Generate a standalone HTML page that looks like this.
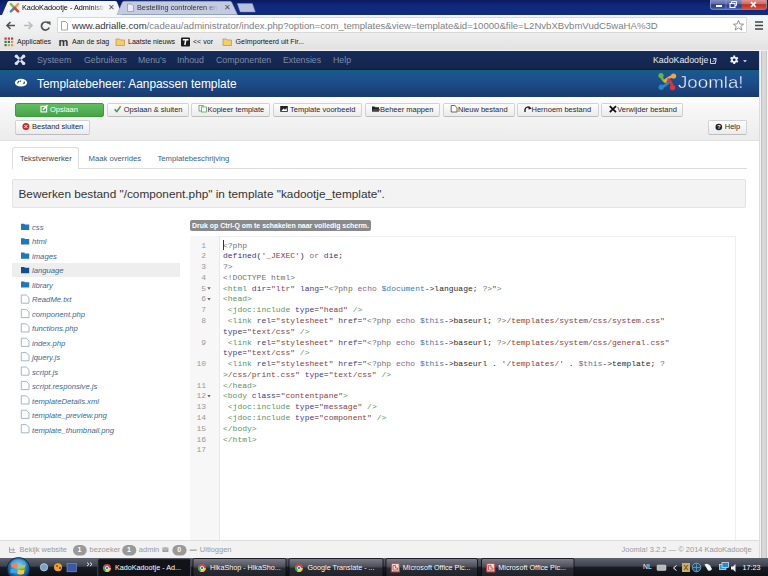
<!DOCTYPE html>
<html><head><meta charset="utf-8">
<style>
*{box-sizing:border-box;margin:0;padding:0}
html,body{width:768px;height:576px;overflow:hidden;background:#fff;font-family:"Liberation Sans",sans-serif}
.a{position:absolute;white-space:nowrap}
#frame{left:0;top:0;width:768px;height:15px;background:linear-gradient(#0a1b60,#10287c 40%,#122c82)}
.tab1{left:0;top:1px;width:126px;height:15px}
#toolbar{left:0;top:14.5px;width:768px;height:36.5px;background:linear-gradient(#f6f7f9,#eeeeee 50%,#e2e2e2);border-bottom:1px solid #f2f2f2}
#bmbar{display:none}
#url{left:56.8px;top:17.3px;width:690px;height:15.8px;background:#fff;border:1px solid #d8d8d8;border-radius:1px}
#nav{left:0;top:51px;width:759px;height:18.5px;background:linear-gradient(#162c5a,#12264c);border-bottom:1.5px solid #0b1a46}
#header{left:0;top:69.5px;width:759px;height:27px;background:linear-gradient(#15607f,#1b5592 15%,#1c4b89 50%,#1a3a6c)}
#subhead{left:0;top:96.5px;width:759px;height:44px;background:linear-gradient(#fefefe,#f6f6f6 30%,#ececec);border-bottom:1px solid #e0e0e0}
.btn{position:absolute;top:103px;height:13.6px;border:1px solid #d2d2d2;border-bottom-color:#bdbdbd;border-radius:2px;background:linear-gradient(#fefefe,#ebebeb);font-size:7.7px;color:#333;line-height:12.5px;text-align:center;white-space:nowrap}
.btn.g{background:linear-gradient(#5fbf5f,#48a348);border-color:#3f9a3f;color:#fff}
#scroll{left:759px;top:51px;width:9px;height:507px;background:#f4f4f4;border-left:0.6px solid #dcdcdc}
#thumb{left:761px;top:51px;width:6px;height:507px;background:#d8d8d8;border-left:1px solid #c0c0c0;border-right:1px solid #c6c6c6}
#footer{left:0;top:540px;width:759px;height:18px;background:#f2f2f2;border-top:1px solid #dddddd;font-size:7.6px;color:#999}
#taskbar{left:0;top:558px;width:768px;height:18px;background:linear-gradient(#5e616e,#3e414e 45%,#1a1c24 52%,#0e0f14)}
.tree{font-size:7.7px;font-style:italic;color:#3a6890;left:32px}
.code{font-family:"Liberation Mono",monospace;font-size:8px;line-height:10.78px;white-space:pre}
.ln{color:#999;font-family:"Liberation Mono",monospace;font-size:8px;text-align:right;width:13px;left:194px}
#lns{left:192px;top:240.5px;width:14px;text-align:right;color:#999}
#codetxt{left:223px;top:240.5px;color:#2a2a2a}
.m{color:#707070}.k{color:#8a648a}.s{color:#8a4040}.t{color:#5a9464}.at{color:#40408a}.v{color:#4a78a8}.b{color:#40307e}
.bt{font-size:7.5px;color:#2a2a2a;line-height:9px}.bt.w{color:#fff}
.ft{top:545.2px;font-size:7.5px;color:#9a9a9a}
.tk{top:563px;font-size:7.2px;color:#fafafa}
</style></head><body>
<!-- window frame / tab strip -->
<div class="a" id="frame"></div>
<svg class="a" style="left:0;top:0" width="768" height="16">
  <path d="M2,15 L7.5,2 Q8,1 9.5,1 L115,1 Q116.5,1 117,2 L122,15 Z" fill="#f6f7f9"/>
  <path d="M117,14.8 L122.5,2 Q123,1.3 124.5,1.3 L229.5,1.3 Q231,1.3 231.5,2 L237.5,14.8 Z" fill="#c3cbe0" stroke="#8f9cc2" stroke-width="0.6"/>
  <path d="M237.3,3.6 L252.4,3.6 L255.3,11.9 L240.2,11.9 Z" fill="#b9c3dc" stroke="#7f8fc0" stroke-width="0.5"/>
  <defs>
   <linearGradient id="wc" x1="0" y1="0" x2="0" y2="1"><stop offset="0" stop-color="#8a9ac8"/><stop offset="0.5" stop-color="#5a6aa8"/><stop offset="0.55" stop-color="#2c3c88"/><stop offset="1" stop-color="#3a58a8"/></linearGradient>
   <linearGradient id="wx" x1="0" y1="0" x2="0" y2="1"><stop offset="0" stop-color="#e0a098"/><stop offset="0.5" stop-color="#d06858"/><stop offset="0.55" stop-color="#b83020"/><stop offset="1" stop-color="#d85040"/></linearGradient>
  </defs>
  <rect x="710.5" y="-1" width="56" height="10.3" rx="1.8" fill="url(#wc)" stroke="#c8d0e8" stroke-width="0.6"/>
  <rect x="741.5" y="-0.7" width="24.7" height="9.7" fill="url(#wx)"/>
  <path d="M726,0 L726,9" stroke="#a0acd0" stroke-width="0.5"/>
  <rect x="716" y="5" width="6" height="2" fill="#fff"/>
  <rect x="730" y="3.5" width="5" height="4" fill="none" stroke="#fff" stroke-width="1.1"/>
  <path d="M731.5,3.5 L731.5,1.5 L736.5,1.5 L736.5,5.5 L735,5.5" fill="none" stroke="#fff" stroke-width="0.9"/>
  <path d="M751,2.2 L755.8,7 M755.8,2.2 L751,7" stroke="#fff" stroke-width="1.7"/>
</svg>
<div class="a" style="left:22px;top:3px;font-size:7.3px;color:#0a0a0a;width:83px;overflow:hidden;-webkit-mask-image:linear-gradient(to right,#000 85%,transparent)">KadoKadootje - Administr</div>
<div class="a" style="left:108px;top:3px;font-size:8px;color:#555">&#x2715;</div>
<div class="a" style="left:137px;top:3px;font-size:7.3px;color:#333;width:81px;overflow:hidden;-webkit-mask-image:linear-gradient(to right,#000 85%,transparent)">Bestelling controleren en</div>
<div class="a" style="left:223.5px;top:3px;font-size:8px;color:#555">&#x2715;</div>

<!-- chrome toolbar -->
<div class="a" id="toolbar"></div>
<div class="a" id="bmbar"></div>
<div class="a" id="url"></div>
<div class="a" style="left:72px;top:19.5px;font-size:9.6px;color:#808080"><span style="color:#333">www.adrialle.com</span>/cadeau/administrator/index.php?option=com_templates&amp;view=template&amp;id=10000&amp;file=L2NvbXBvbmVudC5waHA%3D</div>
<div class="a" style="left:17px;top:37.6px;font-size:7.05px;color:#151515">Applicaties</div>
<div class="a" style="left:72px;top:37.6px;font-size:7.05px;color:#151515">Aan de slag</div>
<div class="a" style="left:128px;top:37.6px;font-size:7.05px;color:#151515">Laatste nieuws</div>
<div class="a" style="left:193px;top:37.6px;font-size:7.05px;color:#151515">&lt;&lt; vor</div>
<div class="a" style="left:235.5px;top:37.6px;font-size:7.05px;color:#151515">Ge&iuml;mporteerd uit Fir...</div>

<svg class="a" style="left:0;top:0" width="768" height="51">
  <!-- favicon joomla -->
  <g transform="translate(14.5,7.8)" stroke-linecap="round">
    <path d="M-3.6,-3.6 L0,0" stroke="#8cc04a" stroke-width="2.6"/>
    <path d="M3.6,-3.6 L0,0" stroke="#f0a040" stroke-width="2.6"/>
    <path d="M-3.6,3.6 L0,0" stroke="#4a8ad0" stroke-width="2.6"/>
    <path d="M3.6,3.6 L0,0" stroke="#d8483a" stroke-width="2.6"/>
  </g>
  <!-- tab2 page icon -->
  <path d="M127.5,4 L131.5,4 L133.5,6 L133.5,11.5 L127.5,11.5 Z" fill="#e8ebf3" stroke="#7d8598" stroke-width="0.6"/>
  <!-- back -->
  <path d="M7,25.5 L15,25.5 M10.5,22 L7,25.5 L10.5,29" stroke="#505050" stroke-width="1.6" fill="none"/>
  <!-- fwd -->
  <path d="M32,25.5 L24,25.5 M28.5,22 L32,25.5 L28.5,29" stroke="#bdbdbd" stroke-width="1.6" fill="none"/>
  <!-- reload -->
  <path d="M48.6,23.5 A4,4 0 1 0 49.2,27.5" stroke="#505050" stroke-width="1.7" fill="none"/>
  <path d="M46.5,21.5 L50.5,21.5 L50.5,25.5 Z" fill="#505050"/>
  <!-- page icon url -->
  <path d="M61.5,21.5 L65.5,21.5 L67.5,23.5 L67.5,30 L61.5,30 Z" fill="#fff" stroke="#8a8a8a" stroke-width="0.8"/>
  <!-- star -->
  <path d="M738.5,20.5 L740,24 L743.6,24.2 L740.8,26.5 L741.8,30 L738.5,28 L735.2,30 L736.2,26.5 L733.4,24.2 L737,24 Z" fill="#fff" stroke="#777" stroke-width="0.8"/>
  <!-- menu -->
  <path d="M755,22 L763,22 M755,25.5 L763,25.5 M755,29 L763,29" stroke="#444" stroke-width="1.4"/>
  <!-- apps grid -->
  <g>
   <rect x="4.5" y="37.5" width="2.2" height="2.2" fill="#c0392b"/><rect x="7.8" y="37.5" width="2.2" height="2.2" fill="#a94a4a"/><rect x="11" y="37.5" width="2.2" height="2.2" fill="#b04040"/>
   <rect x="4.5" y="40.8" width="2.2" height="2.2" fill="#2f7a6a"/><rect x="7.8" y="40.8" width="2.2" height="2.2" fill="#2c7a5a"/><rect x="11" y="40.8" width="2.2" height="2.2" fill="#c8a030"/>
   <rect x="4.5" y="44" width="2.2" height="2.2" fill="#4a7a3a"/><rect x="7.8" y="44" width="2.2" height="2.2" fill="#d8a040"/><rect x="11" y="44" width="2.2" height="2.2" fill="#caa060"/>
  </g>
  <!-- m icon -->
  <text x="58.5" y="45.6" font-family="Liberation Sans" font-weight="bold" font-size="11" fill="#333" transform="scale(1,1)">m</text>
  <!-- folder icons -->
  <path d="M116,39 L119.5,39 L120.5,40 L124.5,40 L124.5,45.5 L116,45.5 Z" fill="#f2cf6a" stroke="#b8923a" stroke-width="0.7"/>
  <path d="M223,39 L226.5,39 L227.5,40 L231.5,40 L231.5,45.5 L223,45.5 Z" fill="#f2cf6a" stroke="#b8923a" stroke-width="0.7"/>
  <!-- T icon -->
  <rect x="181" y="37.5" width="9" height="9" rx="1" fill="#1a1a1a"/>
  <path d="M182.8,39.8 L188.5,39.8 M185.8,39.8 L184.8,45" stroke="#fff" stroke-width="1.5"/>
</svg>
<!-- joomla nav -->
<div class="a" id="nav"></div>
<div class="a" style="left:37px;top:55px;font-size:8.8px;color:#7d8ca6">Systeem</div>
<div class="a" style="left:84px;top:55px;font-size:8.8px;color:#7d8ca6">Gebruikers</div>
<div class="a" style="left:138px;top:55px;font-size:8.8px;color:#7d8ca6">Menu's</div>
<div class="a" style="left:177px;top:55px;font-size:8.8px;color:#7d8ca6">Inhoud</div>
<div class="a" style="left:216px;top:55px;font-size:8.8px;color:#7d8ca6">Componenten</div>
<div class="a" style="left:283px;top:55px;font-size:8.8px;color:#7d8ca6">Extensies</div>
<div class="a" style="left:333px;top:55px;font-size:8.8px;color:#7d8ca6">Help</div>
<div class="a" style="left:653px;top:55px;font-size:8.8px;color:#e8ecf2">KadoKadootje</div>

<!-- header -->
<div class="a" id="header"></div>
<div class="a" style="left:37px;top:77.2px;font-size:11.9px;color:#fff">Templatebeheer: Aanpassen template</div>

<svg class="a" style="left:0;top:51px" width="759" height="46">
  <!-- nav joomla icon -->
  <g transform="translate(20,8.8)" fill="none" stroke-linecap="round">
    <path d="M-3.4,-3.4 L3.4,3.4 M3.4,-3.4 L-3.4,3.4" stroke="#dde1ee" stroke-width="2.6"/>
    <circle cx="-3.6" cy="-3.6" r="1.7" fill="#dde1ee"/>
    <circle cx="3.6" cy="-3.6" r="1.7" fill="#dde1ee"/>
    <circle cx="-3.6" cy="3.6" r="1.7" fill="#dde1ee"/>
    <circle cx="3.6" cy="3.6" r="1.7" fill="#dde1ee"/>
    <path d="M-1.6,0 L0,-1.6 L1.6,0 L0,1.6 Z" fill="#3a4a70"/>
  </g>
  <!-- external link icon -->
  <path d="M710.5,7.5 L710.5,12.5 L715.5,12.5 L715.5,10 M713,7.5 L716,7.5 L716,10.5 M716,7.5 L712.5,11" stroke="#dfe3f0" stroke-width="0.9" fill="none"/>
  <!-- gear -->
  <g transform="translate(734.2,8.8)">
    <circle r="3.1" fill="#f0f2f8"/>
    <path d="M0,-4.2 L0,4.2 M-3.64,-2.1 L3.64,2.1 M3.64,-2.1 L-3.64,2.1" stroke="#f0f2f8" stroke-width="2"/>
    <circle r="1.4" fill="#12264c"/>
  </g>
  <path d="M743,9.3 L747,9.3 L745,11.3 Z" fill="#dfe3f0"/>
  <!-- eye icon -->
  <g transform="translate(21,31.7)">
    <ellipse cx="0" cy="0" rx="6.1" ry="3.9" fill="#fff"/>
    <path d="M-3.1,0.6 A3,2.6 0 0 1 -2.2,-1.6" stroke="#10223f" stroke-width="1.1" fill="none"/>
    <path d="M3.2,-1 A3,2.6 0 0 1 2.6,1.4" stroke="#10223f" stroke-width="1.1" fill="none"/>
    <ellipse cx="-0.7" cy="-1.6" rx="1" ry="0.7" fill="#10223f"/>
  </g>
  <!-- joomla logo symbol -->
  <g transform="translate(0,-51)" stroke-linecap="round" stroke-linejoin="round" fill="none" stroke-width="2.7">
    <path d="M661,75.5 Q662,80 665.8,82.2" stroke="#6cb33e"/>
    <circle cx="661" cy="75.6" r="2.6" fill="#6cb33e"/>
    <path d="M673.5,76 Q668.5,77 664.8,81" stroke="#f5a443"/>
    <circle cx="673.6" cy="76" r="2.6" fill="#f5a443"/>
    <path d="M672.6,87.6 Q671.5,82 668.6,79.4" stroke="#e4333a"/>
    <circle cx="672.6" cy="87.6" r="2.7" fill="#e4333a"/>
    <path d="M661.2,87.2 Q665,86 668.2,83" stroke="#2a86c8"/>
    <circle cx="661.2" cy="87.2" r="2.6" fill="#2a86c8"/>
  </g>
</svg>
<div class="a" style="left:677.5px;top:72.7px;font-size:17px;color:#f4f6fa;-webkit-text-stroke:0.35px #1c4b89;transform-origin:0 0;transform:scaleX(1.1);font-weight:normal">Joomla!</div>
<!-- subhead toolbar -->
<div class="a" id="subhead"></div>
<div class="btn g" style="left:14.9px;top:103px;width:89.2px"></div><div class="a bt w" style="left:50px;top:104.6px">Opslaan</div>
<div class="btn " style="left:106.7px;top:103px;width:82.3px"></div><div class="a bt" style="left:123.75px;top:104.6px">Opslaan &amp; sluiten</div>
<div class="btn " style="left:191.4px;top:103px;width:78.6px"></div><div class="a bt" style="left:207.5px;top:104.6px">Kopieer template</div>
<div class="btn " style="left:273.1px;top:103px;width:88.9px"></div><div class="a bt" style="left:290px;top:104.6px">Template voorbeeld</div>
<div class="btn " style="left:364.6px;top:103px;width:75.4px"></div><div class="a bt" style="left:380px;top:104.6px">Beheer mappen</div>
<div class="btn " style="left:443.1px;top:103px;width:71.7px"></div><div class="a bt" style="left:458px;top:104.6px">Nieuw bestand</div>
<div class="btn " style="left:516.9px;top:103px;width:82.0px"></div><div class="a bt" style="left:531.5px;top:104.6px">Hernoem bestand</div>
<div class="btn " style="left:601.4px;top:103px;width:81.6px"></div><div class="a bt" style="left:617.25px;top:104.6px">Verwijder bestand</div>
<div class="btn " style="left:14.9px;top:120px;width:75.4px;height:14.6px"></div><div class="a bt" style="left:32px;top:122.2px">Bestand sluiten</div>
<div class="btn " style="left:707.8px;top:120px;width:39.3px;height:14.6px"></div><div class="a bt" style="left:724.75px;top:122.2px">Help</div>
<svg class="a" style="left:0;top:97px" width="759" height="44">
 <!-- save icon (edit) -->
 <g transform="translate(0,0)">
  <rect x="41" y="9.3" width="5.6" height="5.6" fill="none" stroke="#fff" stroke-width="1.1"/>
  <path d="M43,12.8 L47.5,8.2" stroke="#fff" stroke-width="1.4"/>
 </g>
 <!-- check -->
 <path d="M114.6,12.4 L116.8,14.6 L120.6,9.4" stroke="#4a9a4a" stroke-width="1.6" fill="none"/>
 <!-- copy -->
 <rect x="199" y="8.5" width="4.2" height="5.5" fill="none" stroke="#5aa45a" stroke-width="0.8"/>
 <rect x="201.5" y="10" width="5" height="5" fill="#fff" stroke="#5aa45a" stroke-width="0.8"/>
 <!-- picture -->
 <rect x="280.2" y="9" width="7.6" height="5.8" fill="#222"/>
 <path d="M281.3,14 L283.5,11.5 L285,12.8 L286.5,11 L287,14 Z" fill="#fff"/>
 <!-- folder open -->
 <path d="M372,9.5 L374.5,9.5 L375.3,10.3 L379,10.3 L379,14.5 L372,14.5 Z" fill="#222"/>
 <path d="M373,12 L380,12 L379,14.5 L372,14.5 Z" fill="#444"/>
 <!-- new file -->
 <path d="M451.2,8.5 L454.8,8.5 L457,10.7 L457,15 L451.2,15 Z" fill="#fff" stroke="#444" stroke-width="0.8"/>
 <!-- refresh -->
 <path d="M530.5,11.5 A3,3 0 0 0 525,12.5 L525,15" stroke="#222" stroke-width="1.4" fill="none"/>
 <path d="M528.8,9.2 L531.8,11.8 L528.4,12.6 Z" fill="#222"/>
 <!-- X -->
 <path d="M609.8,9.2 L616,15.2 M616,9.2 L609.8,15.2" stroke="#111" stroke-width="1.8"/>
 <!-- remove circle -->
 <circle cx="25.9" cy="29.5" r="3.5" fill="#b8322a"/>
 <path d="M24.5,28.1 L27.3,30.9 M27.3,28.1 L24.5,30.9" stroke="#fff" stroke-width="1"/>
 <!-- help -->
 <circle cx="718.8" cy="30" r="3.3" fill="#222"/>
 <text x="717.2" y="32.3" font-family="Liberation Sans" font-weight="bold" font-size="5.6" fill="#fff">?</text>
</svg>
<!-- tabs -->
<div class="a" style="left:12px;top:167.5px;width:734.5px;height:1px;background:#dddddd"></div>
<div class="a" style="left:11.8px;top:146.6px;width:67.6px;height:22px;background:#fff;border:1px solid #dddddd;border-bottom:none;border-radius:3px 3px 0 0"></div>
<div class="a" style="left:20px;top:154px;font-size:7.7px;color:#444">Tekstverwerker</div>
<div class="a" style="left:88.5px;top:154px;font-size:7.7px;color:#3a6285">Maak overrides</div>
<div class="a" style="left:157.5px;top:154px;font-size:7.7px;color:#3a6285">Templatebeschrijving</div>

<!-- message -->
<div class="a" style="left:11.8px;top:178.9px;width:734.7px;height:29px;background:#f3f3f3;border:1px solid #e3e3e3;border-radius:2px"></div>
<div class="a" style="left:18.5px;top:186.5px;font-size:11.8px;color:#333">Bewerken bestand "/component.php" in template "kadootje_template".</div>

<!-- file tree -->
<div class="a" style="left:12px;top:263px;width:168px;height:14px;background:#eeeeee"></div>
<div class="a tree" style="top:222.5px">css</div>
<div class="a tree" style="top:237px">html</div>
<div class="a tree" style="top:251.5px">images</div>
<div class="a tree" style="top:266px">language</div>
<div class="a tree" style="top:280.5px">library</div>
<div class="a tree" style="top:295px">ReadMe.txt</div>
<div class="a tree" style="top:309.5px">component.php</div>
<div class="a tree" style="top:324px">functions.php</div>
<div class="a tree" style="top:338.5px">index.php</div>
<div class="a tree" style="top:353px">jquery.js</div>
<div class="a tree" style="top:367.5px">script.js</div>
<div class="a tree" style="top:382px">script.responsive.js</div>
<div class="a tree" style="top:396.5px">templateDetails.xml</div>
<div class="a tree" style="top:411px">template_preview.png</div>
<div class="a tree" style="top:425.5px">template_thumbnail.png</div>

<svg class="a" style="left:0;top:0" width="190" height="440">
 <path d="M21,223.8 L24.2,223.8 L25,224.6 L29.2,224.6 L29.2,230.0 L21,230.0 Z" fill="#1f78b8"/>
 <path d="M21,238.2 L24.2,238.2 L25,239.0 L29.2,239.0 L29.2,244.4 L21,244.4 Z" fill="#1f78b8"/>
 <path d="M21,252.6 L24.2,252.6 L25,253.4 L29.2,253.4 L29.2,258.8 L21,258.8 Z" fill="#1f78b8"/>
 <path d="M21,267.0 L24.2,267.0 L25,267.8 L29.2,267.8 L29.2,273.2 L21,273.2 Z" fill="#0e5289"/>
 <path d="M21,281.4 L24.2,281.4 L25,282.2 L29.2,282.2 L29.2,287.6 L21,287.6 Z" fill="#1f78b8"/>
 <path d="M21.3,295.0 L26.3,295.0 L29,297.7 L29,303.2 L21.3,303.2 Z" fill="none" stroke="#8ea6b8" stroke-width="0.8"/>
 <path d="M21.3,309.4 L26.3,309.4 L29,312.1 L29,317.6 L21.3,317.6 Z" fill="none" stroke="#8ea6b8" stroke-width="0.8"/>
 <path d="M21.3,323.8 L26.3,323.8 L29,326.5 L29,332.0 L21.3,332.0 Z" fill="none" stroke="#8ea6b8" stroke-width="0.8"/>
 <path d="M21.3,338.2 L26.3,338.2 L29,340.9 L29,346.4 L21.3,346.4 Z" fill="none" stroke="#8ea6b8" stroke-width="0.8"/>
 <path d="M21.3,352.6 L26.3,352.6 L29,355.3 L29,360.8 L21.3,360.8 Z" fill="none" stroke="#8ea6b8" stroke-width="0.8"/>
 <path d="M21.3,367.0 L26.3,367.0 L29,369.7 L29,375.2 L21.3,375.2 Z" fill="none" stroke="#8ea6b8" stroke-width="0.8"/>
 <path d="M21.3,381.4 L26.3,381.4 L29,384.1 L29,389.6 L21.3,389.6 Z" fill="none" stroke="#8ea6b8" stroke-width="0.8"/>
 <path d="M21.3,395.8 L26.3,395.8 L29,398.5 L29,404.0 L21.3,404.0 Z" fill="none" stroke="#8ea6b8" stroke-width="0.8"/>
 <path d="M21.3,410.2 L26.3,410.2 L29,412.9 L29,418.4 L21.3,418.4 Z" fill="none" stroke="#8ea6b8" stroke-width="0.8"/>
 <path d="M21.3,424.6 L26.3,424.6 L29,427.3 L29,432.8 L21.3,432.8 Z" fill="none" stroke="#8ea6b8" stroke-width="0.8"/>
</svg>
<!-- editor -->
<div class="a" style="left:190px;top:220px;width:181px;height:11px;background:#8a8a8a;border-radius:2px"></div>
<div class="a" style="left:192px;top:222.2px;font-size:6.95px;color:#fff;font-weight:bold">Druk op Ctrl-Q om te schakelen naar volledig scherm.</div>
<div class="a" style="left:190px;top:236px;width:545.5px;height:304px;border:1px solid #eeeeee;border-bottom:none"></div>
<div class="a" style="left:190px;top:236px;width:30px;height:304px;background:#f7f7f7;border-right:1px solid #e8e8e8"></div>

<div class="a code" id="lns">1<br>2<br>3<br>4<br>5<br>6<br>7<br>8<br>&nbsp;<br>9<br>&nbsp;<br>10<br>&nbsp;<br>11<br>12<br>13<br>14<br>15<br>16<br>17</div>
<div class="a code" id="codetxt"><span class="m">&lt;?php</span><br><span class="b">defined</span>(<span class="s">&#x27;_JEXEC&#x27;</span>) <span class="k">or</span> <span class="b">die</span>;<br><span class="m">?&gt;</span><br><span class="m">&lt;!DOCTYPE html&gt;</span><br><span class="t">&lt;html</span> <span class="at">dir</span>=<span class="s">&quot;ltr&quot;</span> <span class="at">lang</span>=<span class="s">&quot;</span><span class="m">&lt;?php</span> <span class="k">echo</span> <span class="v">$document</span>-&gt;language; <span class="m">?&gt;</span><span class="s">&quot;</span><span class="t">&gt;</span><br><span class="t">&lt;head&gt;</span><br> <span class="t">&lt;jdoc:include</span> <span class="at">type</span>=<span class="s">&quot;head&quot;</span> <span class="t">/&gt;</span><br> <span class="t">&lt;link</span> <span class="at">rel</span>=<span class="s">&quot;stylesheet&quot;</span> <span class="at">href</span>=<span class="s">&quot;</span><span class="m">&lt;?php</span> <span class="k">echo</span> <span class="v">$this</span>-&gt;baseurl; <span class="m">?&gt;</span><span class="s">/templates/system/css/system.css&quot;</span><br><span class="at">type</span>=<span class="s">&quot;text/css&quot;</span> <span class="t">/&gt;</span><br> <span class="t">&lt;link</span> <span class="at">rel</span>=<span class="s">&quot;stylesheet&quot;</span> <span class="at">href</span>=<span class="s">&quot;</span><span class="m">&lt;?php</span> <span class="k">echo</span> <span class="v">$this</span>-&gt;baseurl; <span class="m">?&gt;</span><span class="s">/templates/system/css/general.css&quot;</span><br><span class="at">type</span>=<span class="s">&quot;text/css&quot;</span> <span class="t">/&gt;</span><br> <span class="t">&lt;link</span> <span class="at">rel</span>=<span class="s">&quot;stylesheet&quot;</span> <span class="at">href</span>=<span class="s">&quot;</span><span class="m">&lt;?php</span> <span class="k">echo</span> <span class="v">$this</span>-&gt;baseurl . <span class="s">&#x27;/templates/&#x27;</span> . <span class="v">$this</span>-&gt;template; <span class="m">?</span><br><span class="m">&gt;</span><span class="s">/css/print.css&quot;</span> <span class="at">type</span>=<span class="s">&quot;text/css&quot;</span> <span class="t">/&gt;</span><br><span class="t">&lt;/head&gt;</span><br><span class="t">&lt;body</span> <span class="at">class</span>=<span class="s">&quot;contentpane&quot;</span><span class="t">&gt;</span><br> <span class="t">&lt;jdoc:include</span> <span class="at">type</span>=<span class="s">&quot;message&quot;</span> <span class="t">/&gt;</span><br> <span class="t">&lt;jdoc:include</span> <span class="at">type</span>=<span class="s">&quot;component&quot;</span> <span class="t">/&gt;</span><br><span class="t">&lt;/body&gt;</span><br><span class="t">&lt;/html&gt;</span><br>&nbsp;</div>
<div class="a" style="left:222.5px;top:240.3px;width:0.8px;height:10px;background:#333"></div>
<svg class="a" style="left:0;top:0" width="230" height="420"><path d="M207.3,287.2 L210.7,287.2 L209,289.7 Z" fill="#666"/><path d="M207.3,298.0 L210.7,298.0 L209,300.5 Z" fill="#666"/><path d="M207.3,395.0 L210.7,395.0 L209,397.5 Z" fill="#666"/></svg>
<!-- scrollbar -->
<div class="a" id="scroll"></div>
<div class="a" id="thumb"></div>

<!-- footer -->
<div class="a" id="footer"></div>
<svg class="a" style="left:0;top:540px" width="759" height="17">
 <path d="M9.5,7 L9.5,12.5 L15.5,12.5 M9.5,9.8 L14,9.8 M12.5,8 L14.5,9.8 L12.5,11.6" stroke="#a0a0a0" stroke-width="0.9" fill="none"/>
 <rect x="73" y="5" width="13.7" height="10.5" rx="5.2" fill="#999"/>
 <rect x="122.2" y="5" width="14.1" height="10.5" rx="5.2" fill="#999"/>
 <rect x="162.4" y="7.4" width="6" height="4.6" fill="#a0a0a0"/>
 <path d="M162.4,7.4 L165.4,10 L168.4,7.4" stroke="#f0f0f0" stroke-width="0.6" fill="none"/>
 <rect x="172.4" y="5" width="14.2" height="10.5" rx="5.2" fill="#999"/>
 <rect x="189.7" y="9.5" width="7" height="1.3" fill="#a0a0a0"/>
</svg>
<div class="a ft" style="left:19.5px">Bekijk website</div>
<div class="a ft" style="left:77.6px;color:#fff;font-weight:bold;font-size:7px;top:545.6px">1</div>
<div class="a ft" style="left:89.5px">bezoeker</div>
<div class="a ft" style="left:127px;color:#fff;font-weight:bold;font-size:7px;top:545.6px">1</div>
<div class="a ft" style="left:138.8px">admin</div>
<div class="a ft" style="left:177.2px;color:#fff;font-weight:bold;font-size:7px;top:545.6px">0</div>
<div class="a ft" style="left:199.8px">Uitloggen</div>
<div class="a ft" style="left:621.5px">Joomla! 3.2.2 &mdash; &copy; 2014 KadoKadootje</div>

<!-- taskbar -->
<div class="a" id="taskbar"></div>
<svg class="a" style="left:0;top:556.5px" width="768" height="20">
 <defs>
  <radialGradient id="orb" cx="50%" cy="40%" r="60%"><stop offset="0" stop-color="#7fd0f0"/><stop offset="0.5" stop-color="#2a88c8"/><stop offset="1" stop-color="#0b2a55"/></radialGradient>
  <linearGradient id="tb" x1="0" y1="0" x2="0" y2="1"><stop offset="0" stop-color="#4a4d5a"/><stop offset="0.45" stop-color="#2c2f3a"/><stop offset="0.5" stop-color="#15171f"/><stop offset="1" stop-color="#0c0d12"/></linearGradient>
  <linearGradient id="tbb" x1="0" y1="0" x2="0" y2="1"><stop offset="0" stop-color="#7c7e8a"/><stop offset="0.45" stop-color="#4c4e5a"/><stop offset="0.52" stop-color="#2a2c36"/><stop offset="1" stop-color="#202228"/></linearGradient>
 <g id="chr">
 <circle cx="0" cy="0" r="3.9" fill="#d8433a"/>
 <path d="M0,0 L-3.4,-1.9 A3.9,3.9 0 0 0 -1.95,3.38 Z" fill="#3aa84a"/>
 <path d="M0,0 L-1.95,3.38 A3.9,3.9 0 0 0 3.9,0 Z" fill="#f8c82a"/>
 <circle cx="0" cy="0" r="1.7" fill="#3a7ad8" stroke="#fff" stroke-width="0.7"/>
 </g>
 </defs>
 <circle cx="18.5" cy="12" r="11.5" fill="url(#orb)" stroke="#0a1a30" stroke-width="0.8"/>
 <path d="M11.5,6.8 Q14.8,5.6 18,7.2 L17.3,11.4 Q14.2,10 11,11 Z" fill="#f06a35"/>
 <path d="M18.8,7.4 Q22.2,8.8 25.5,7.4 L24.8,11.6 Q21.5,13 18.1,11.6 Z" fill="#8cc43c"/>
 <path d="M10.8,12 Q14,11 17.1,12.4 L16.4,16.6 Q13.3,15.2 10.1,16.2 Z" fill="#3aa6e8"/>
 <path d="M17.9,12.6 Q21.3,14 24.6,12.6 L23.9,16.8 Q20.6,18.2 17.2,16.8 Z" fill="#fbc630"/>
 <ellipse cx="18.5" cy="7" rx="8" ry="4.5" fill="#fff" opacity="0.18"/>
 <circle cx="44" cy="10.3" r="3.7" fill="#7aa4c4" stroke="#c8dcec" stroke-width="0.7"/>
 <circle cx="58" cy="10.3" r="4" fill="#f2a22a"/>
 <circle cx="60" cy="11" r="1" fill="#5a2a10"/><circle cx="57" cy="9" r="1" fill="#8a4a10"/>
 <rect x="67" y="6.5" width="9.3" height="8.3" fill="#3a5aa8" stroke="#7a9ad0" stroke-width="0.6"/>
 <path d="M87,5.5 L89,7.3 L87,9.1 M90,5.5 L92,7.3 L90,9.1" stroke="#eee" stroke-width="1" fill="none"/>
 <rect x="97.8" y="1.8" width="92.8" height="18.2" rx="1.5" fill="#121318" stroke="#55565e" stroke-width="0.8"/>
 <rect x="193" y="1.5" width="93" height="18.5" rx="1.5" fill="url(#tbb)" stroke="#0a0a0f" stroke-width="0.8"/>
 <rect x="289" y="1.5" width="94" height="18.5" rx="1.5" fill="url(#tbb)" stroke="#0a0a0f" stroke-width="0.8"/>
 <rect x="386" y="1.5" width="91.5" height="18.5" rx="1.5" fill="url(#tbb)" stroke="#0a0a0f" stroke-width="0.8"/>
 <rect x="481.5" y="1.5" width="92.5" height="18.5" rx="1.5" fill="url(#tbb)" stroke="#0a0a0f" stroke-width="0.8"/>

 <use href="#chr" x="107" y="11"/>
 <use href="#chr" x="202" y="11"/>
 <use href="#chr" x="299" y="11"/>
 <rect x="391.3" y="6.3" width="8" height="8.6" fill="#f0d8d0" stroke="#c84040" stroke-width="1.1"/>
 <path d="M393,8.5 L395.5,8.5 L395.5,11 L397.5,11 L397.5,13 L393,13 Z" fill="none" stroke="#c84040" stroke-width="0.8"/>
 <rect x="486.8" y="6.3" width="8" height="8.6" fill="#f0d8d0" stroke="#c84040" stroke-width="1.1"/>
 <path d="M488.5,8.5 L491,8.5 L491,11 L493,11 L493,13 L488.5,13 Z" fill="none" stroke="#c84040" stroke-width="0.8"/>
 <!-- tray -->
 <rect x="657" y="8" width="9" height="5.5" rx="1" fill="#b8b8b8" stroke="#ddd" stroke-width="0.5"/>
 <path d="M676.5,8.5 L673.5,11 L676.5,13.5" stroke="#fff" stroke-width="1" fill="none"/>
 <rect x="682" y="6" width="8" height="9" fill="#c8b070"/>
 <path d="M684,8 L688,13 M688,8 L684,13" stroke="#806010" stroke-width="1.2"/>
 <circle cx="696.5" cy="10.5" r="4.3" fill="#1f4a88" stroke="#9cc" stroke-width="0.7"/>
 <path d="M696.5,6.5 L696.5,14.5 M693,10.5 L700,10.5" stroke="#6a9" stroke-width="0.8"/>
 <path d="M704.5,7.5 Q707,5.5 710,8.5 L712,12 Q711,14.5 708,13.5 Z" fill="#f4f4f4"/>
 <rect x="719.5" y="7.5" width="6.5" height="5" fill="#2a9ad8" stroke="#def" stroke-width="0.7"/>
 <rect x="722" y="5.5" width="6.5" height="5" fill="#2a8ac8" stroke="#def" stroke-width="0.7"/>
 <path d="M731,9.5 L733,9.5 L735.5,7 L735.5,15 L733,12.5 L731,12.5 Z" fill="#eee"/>
</svg>
<div class="a tk" style="left:115px">KadoKadootje - Ad...</div>
<div class="a tk" style="left:210px">HikaShop - HikaSho...</div>
<div class="a tk" style="left:307.5px">Google Translate - ...</div>
<div class="a tk" style="left:402.8px">Microsoft Office Pic...</div>
<div class="a tk" style="left:498.3px">Microsoft Office Pic...</div>
<div class="a tk" style="left:643px;font-size:6.8px">NL</div>
<div class="a tk" style="left:742.5px">17:23</div>
</body></html>
